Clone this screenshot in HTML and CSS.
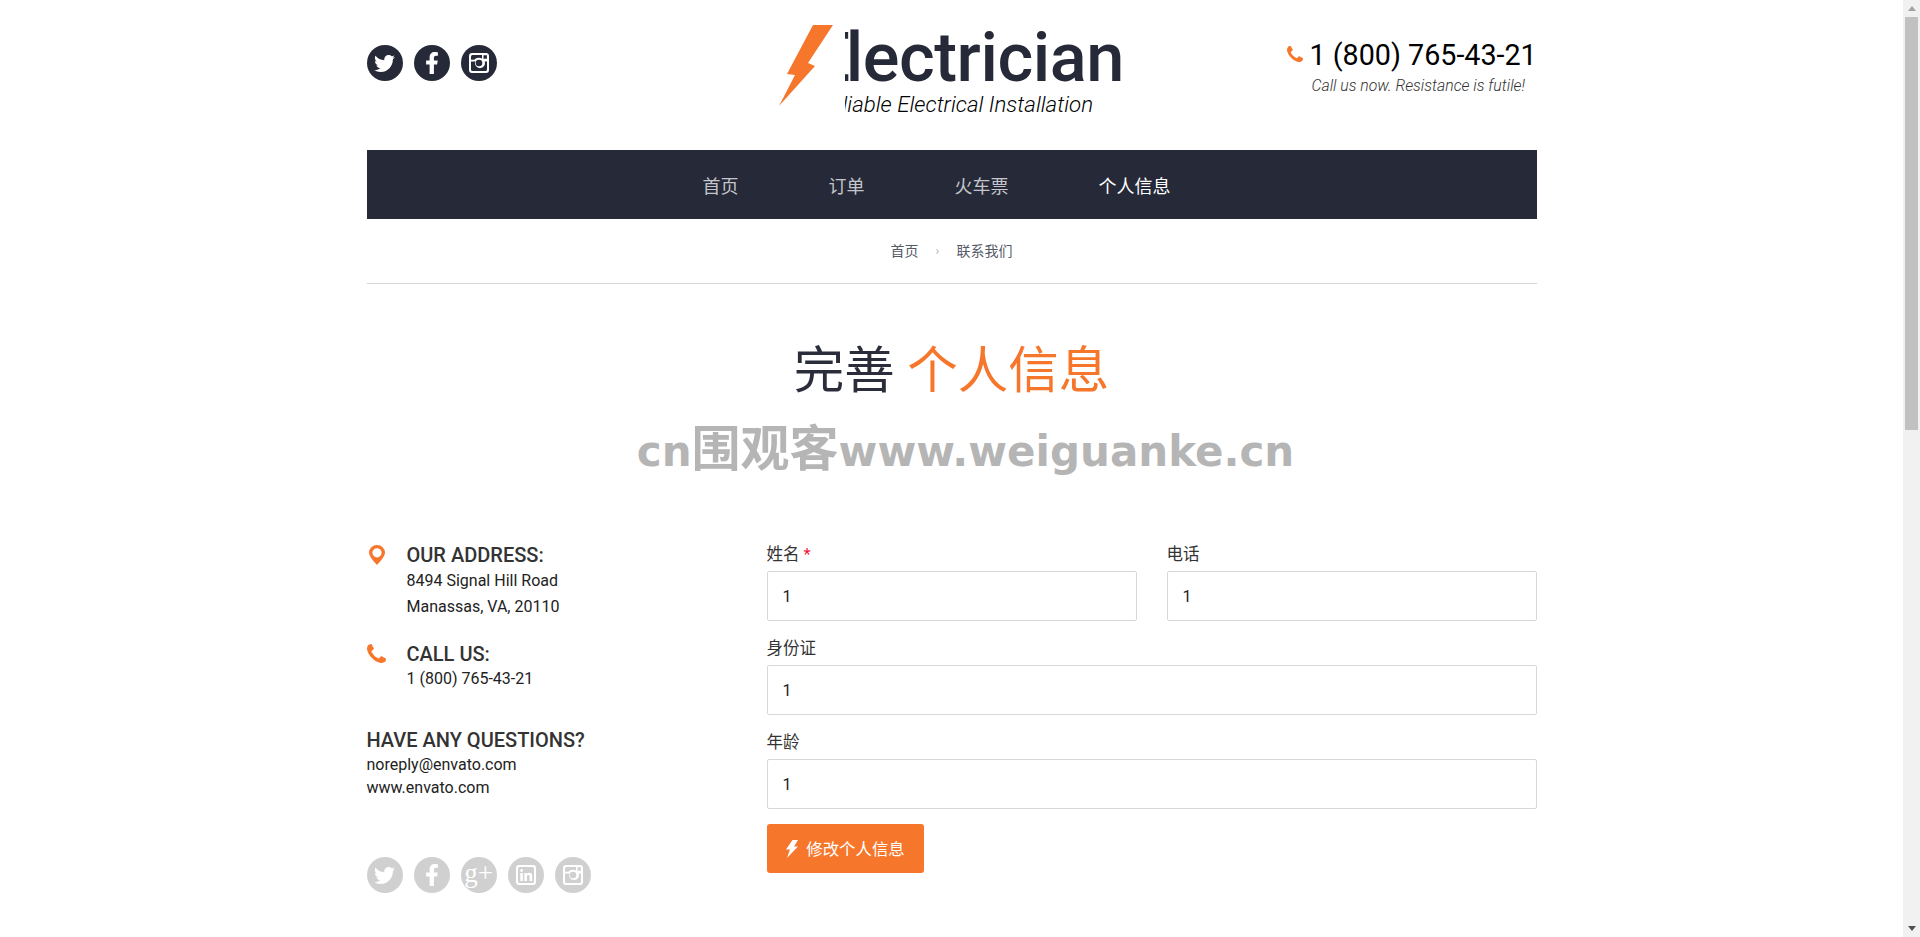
FILE: index.html
```html
<!DOCTYPE html>
<html lang="zh">
<head>
<meta charset="utf-8">
<title>Electrician</title>
<link rel="stylesheet" href="styles.css">
</head>
<body>
<svg class="defs" width="0" height="0" aria-hidden="true">
  <symbol id="i-tw" viewBox="0 0 512 512"><path fill="currentColor" d="M459.37 151.716c.325 4.548.325 9.097.325 13.645 0 138.72-105.583 298.558-298.558 298.558-59.452 0-114.68-17.219-161.137-47.106 8.447.974 16.568 1.299 25.34 1.299 49.055 0 94.213-16.568 130.274-44.832-46.132-.975-84.792-31.188-98.112-72.772 6.498.974 12.995 1.624 19.818 1.624 9.421 0 18.843-1.3 27.614-3.573-48.081-9.747-84.143-51.98-84.143-102.985v-1.299c13.969 7.797 30.214 12.67 47.431 13.319-28.264-18.843-46.781-51.005-46.781-87.391 0-19.492 5.197-37.36 14.294-52.954 51.655 63.675 129.3 105.258 216.365 109.807-1.624-7.797-2.599-15.918-2.599-24.04 0-57.828 46.782-104.934 104.934-104.934 30.213 0 57.502 12.67 76.67 33.137 23.715-4.548 46.456-13.32 66.599-25.34-7.798 24.366-24.366 44.833-46.132 57.827 21.117-2.273 41.584-8.122 60.426-16.243-14.292 20.791-32.161 39.308-52.628 54.253z"/></symbol>
  <symbol id="i-fb" viewBox="0 0 320 512"><path fill="currentColor" d="M279.14 288l14.22-92.66h-88.91v-60.13c0-25.35 12.42-50.06 52.24-50.06h40.42V6.26S260.43 0 225.36 0c-73.22 0-121.08 44.38-121.08 124.72v70.62H22.89V288h81.39v224h100.17V288z"/></symbol>
  <symbol id="i-ig" viewBox="0 0 20 20"><path fill="currentColor" fill-rule="evenodd" d="M3 0h14a3 3 0 0 1 3 3v14a3 3 0 0 1-3 3H3a3 3 0 0 1-3-3V3a3 3 0 0 1 3-3zM2 8.500V16.500a1.500 1.500 0 0 0 1.500 1.500h13a1.500 1.500 0 0 0 1.500-1.500V8.500h-2.300a5 5 0 1 1-9.400 0zM10 6.700a3.300 3.300 0 1 0 0 6.600 3.300 3.300 0 0 0 0-6.600zM2 6.800h3.200A6 6 0 0 1 10 4.800a6 6 0 0 1 3 .8V2H3.500A1.500 1.500 0 0 0 2 3.500zM14.500 2.200v3.600h3.400V2.200z"/></symbol>
  <symbol id="i-in" viewBox="0 0 20 20"><path fill="currentColor" fill-rule="evenodd" d="M3 0h14a3 3 0 0 1 3 3v14a3 3 0 0 1-3 3H3a3 3 0 0 1-3-3V3a3 3 0 0 1 3-3zM3.500 2A1.500 1.500 0 0 0 2 3.500v13A1.500 1.500 0 0 0 3.500 18h13a1.500 1.500 0 0 0 1.500-1.500v-13A1.500 1.500 0 0 0 16.500 2z"/><path fill="currentColor" d="M4.300 8h2.600v8H4.300zM5.600 4a1.400 1.400 0 1 1 0 2.900 1.400 1.400 0 0 1 0-2.900zM8.300 8h2.500v1.100c.4-.7 1.300-1.300 2.500-1.300 2.200 0 2.900 1.400 2.900 3.500V16h-2.600v-4.200c0-1-.3-1.700-1.200-1.700-1 0-1.500.7-1.500 1.800V16H8.300z"/></symbol>
  <symbol id="i-ph" viewBox="0 128 1408 1408"><path fill="currentColor" d="M1408 1240q0 27-10 70.500t-21 68.500q-21 50-122 106-94 51-186 51-27 0-53-3.500t-57.500-12.500-47-14.500-55.500-20.500-49-18q-98-35-175-83-127-79-264-216t-216-264q-48-77-83-175-3-9-18-49t-20.500-55.500-14.500-47-12.500-57.500-3.500-53q0-92 51-186 56-101 106-122 25-11 68.500-21t70.500-10q14 0 21 3 18 6 53 76 11 19 30 54t35 63.500 31 53.500q3 4 17.500 25t21.500 35.500 7 28.500q0 20-28.500 50t-62 55-62 53-28.500 46q0 9 5 22.500t8.500 20.500 14 24 11.500 19q76 137 174 235t235 174q2 1 19 11.500t24 14 20.500 8.500 22.500 5q18 0 46-28.500t53-62 55-62 50-28.500q14 0 28.500 7t35.500 21.500 25 17.500q25 15 53.500 31t63.500 35 54 30q70 35 76 53 3 7 3 21z"/></symbol>
</svg>

<div class="screen">
  <div class="page">
    <div class="container">
      <header class="header">
        <ul class="social">
          <li class="circle dark"><svg class="ic-tw"><use href="#i-tw"/></svg></li>
          <li class="circle dark"><svg class="ic-fb"><use href="#i-fb"/></svg></li>
          <li class="circle dark"><svg class="ic-ig"><use href="#i-ig"/></svg></li>
        </ul>
        <div class="logo">
          <svg class="bolt" viewBox="0 0 60 86"><polygon fill="#f6772b" points="34,0 54,0 29,38 36,41 0,81 16,50 8,49"/></svg>
          <div class="logo-text">
            <div class="logo-name"><span class="logo-e">E</span>lectrician</div>
            <div class="logo-sub">Reliable Electrical Installation</div>
          </div>
        </div>
        <div class="contact">
          <div class="contact-phone"><svg class="ic-phone"><use href="#i-ph"/></svg>1 (800) 765-43-21</div>
          <div class="contact-note">Call us now. Resistance is futile!</div>
        </div>
      </header>

      <nav class="nav">
        <a class="nav-item">首页</a>
        <a class="nav-item">订单</a>
        <a class="nav-item">火车票</a>
        <a class="nav-item active">个人信息</a>
      </nav>

      <div class="crumbs">
        <a>首页</a><span class="sep">›</span><a>联系我们</a>
      </div>

      <h1 class="title">完善 <span class="accent">个人信息</span></h1>
      <div class="watermark">cn<span class="wm-cjk">围观客</span>www.weiguanke.cn</div>

      <div class="columns">
        <aside class="info">
          <div class="info-block with-icon">
            <svg class="ic-pin" viewBox="0 0 16 20"><path fill="#f6772b" fill-rule="evenodd" d="M8 20Q0 11.500 0 7.700a8 7.700 0 0 1 16 0Q16 11.500 8 20zM8 3.200a4.600 4.600 0 1 0 0 9.200 4.600 4.600 0 0 0 0-9.200z"/></svg>
            <h4>OUR ADDRESS:</h4>
            <p>8494 Signal Hill Road</p>
            <p>Manassas, VA, 20110</p>
          </div>
          <div class="info-block with-icon call">
            <svg class="ic-call"><use href="#i-ph"/></svg>
            <h4>CALL US:</h4>
            <p>1 (800) 765-43-21</p>
          </div>
          <div class="info-block questions">
            <h4>HAVE ANY QUESTIONS?</h4>
            <p>noreply@envato.com</p>
            <p>www.envato.com</p>
          </div>
          <ul class="social grey">
            <li class="circle light"><svg class="ic-tw"><use href="#i-tw"/></svg></li>
            <li class="circle light"><svg class="ic-fb"><use href="#i-fb"/></svg></li>
            <li class="circle light gplus">g+</li>
            <li class="circle light"><svg class="ic-ig"><use href="#i-in"/></svg></li>
            <li class="circle light"><svg class="ic-ig"><use href="#i-ig"/></svg></li>
          </ul>
        </aside>

        <form class="form">
          <div class="row two">
            <label class="field"><span class="lbl">姓名 <em>*</em></span><input class="input" value="1"></label>
            <label class="field"><span class="lbl">电话</span><input class="input" value="1"></label>
          </div>
          <label class="field"><span class="lbl">身份证</span><input class="input" value="1"></label>
          <label class="field"><span class="lbl">年龄</span><input class="input" value="1"></label>
          <button class="btn" type="button"><svg class="ic-btn" viewBox="0 0 12 18"><polygon fill="#fff" points="6.500,0 12,0 8,6.500 12,6.500 1,18 4,9.500 0,9.500"/></svg><span class="btn-label">修改个人信息</span></button>
        </form>
      </div>
    </div>
  </div>
  <div class="scrollbar">
    <div class="sb-btn"><span class="arrow up"></span></div>
    <div class="sb-track"><div class="sb-thumb"></div></div>
    <div class="sb-btn"><span class="arrow down"></span></div>
  </div>
</div>
</body>
</html>
```
FILE: styles.css
```css
* { box-sizing: border-box; }
html, body { margin: 0; padding: 0; height: 100%; overflow: hidden; background: #fff; }
body { font-family: Roboto, "Noto Sans CJK SC", sans-serif; color: #262937; }
ul { list-style: none; margin: 0; padding: 0; }
h1, h4, p { margin: 0; }
.defs { display: block; height: 0; }

.screen { display: flex; height: 937px; overflow: hidden; }
.page { flex: 1; min-width: 0; overflow: hidden; }
.container { width: 1170px; margin: 0 auto; }

.header { height: 150px; display: flex; align-items: flex-start; }
.social { display: flex; gap: 11px; flex: none; }
.header .social { margin-top: 45px; }
.circle { width: 36px; height: 36px; border-radius: 50%; display: flex; align-items: center; justify-content: center; }
.circle.dark { background: #262937; color: #fff; }
.circle.light { background: #d0d0d0; color: #fff; }
.ic-tw { width: 21px; height: 21px; }
.ic-fb { width: 14px; height: 22px; }
.ic-ig { width: 20px; height: 20px; }
.gplus { font: 27px/32px "Liberation Serif", serif; padding-bottom: 5px; }

.logo { display: flex; align-items: flex-start; margin-top: 25px; margin-left: 282px; flex: none; }
.bolt { width: 60px; height: 86px; flex: none; display: block; margin-right: 6px; }
.logo-text { width: 290px; overflow: hidden; padding-top: 2px; }
.logo-name { font-size: 68.5px; line-height: 62px; font-weight: 500; color: #262937; margin-left: -33px; white-space: nowrap; letter-spacing: -.45px; }
.logo-e { letter-spacing: -4.5px; }
.logo-sub { font-size: 22.3px; line-height: 28px; font-style: italic; font-weight: 300; color: #000; margin-left: -27px; white-space: nowrap; margin-top: 1px; }

.contact { margin-top: 38px; margin-left: auto; width: 250px; }
.contact-phone { display: flex; align-items: center; font-size: 28.7px; line-height: 34px; color: #000; white-space: nowrap; }
.ic-phone { width: 16px; height: 16px; color: #f6772b; margin-right: 7px; flex: none; margin-top: -3px; }
.contact-note { font-size: 15.8px; line-height: 20px; font-style: italic; font-weight: 300; color: #333; margin-top: 4px; padding-left: 25px; white-space: nowrap; }

.nav { height: 69px; background: #262937; display: flex; align-items: center; padding-left: 336px; gap: 90px; }
.nav-item { font-size: 18px; color: #c4c6cb; }
.nav-item.active { color: #fff; }

.crumbs { height: 65px; border-bottom: 1px solid #d5d5d5; display: flex; justify-content: center; align-items: center; font-size: 14px; color: #555a67; padding-bottom: 2px; }
.crumbs .sep { margin: 0 17px; color: #b5b5b5; font-size: 13px; }

.title { margin-top: 55px; height: 64px; font-size: 50.5px; line-height: 64px; font-weight: 400; text-align: center; color: #2b2e3a; }
.accent { color: #f6772b; }
.watermark { margin-top: 20px; padding-left: 28px; height: 54px; line-height: 54px; text-align: center; font-family: "DejaVu Sans", "Noto Sans CJK SC", sans-serif; font-weight: 700; font-size: 42px; color: #b5b5b5; white-space: nowrap; }
.wm-cjk { font-size: 49px; }

.columns { display: flex; margin-top: 66px; }
.info { width: 400px; flex: none; }
.info-block { position: relative; }
.with-icon { padding-left: 40px; }
.info h4 { font-size: 20px; line-height: 25px; font-weight: 500; color: #333; }
.info .call h4 { line-height: 24px; }
.info p { font-size: 16px; line-height: 26px; color: #222; }
.ic-pin { position: absolute; left: 2px; top: 2px; width: 16px; height: 20px; }
.ic-call { position: absolute; left: 0; top: 2px; width: 19px; height: 19px; color: #f6772b; }
.call { margin-top: 22px; }
.questions { margin-top: 36px; }
.questions p { line-height: 23px; }
.grey { margin-top: 58px; }

.form { flex: 1; min-width: 0; display: flex; flex-direction: column; gap: 16px; }
.row.two { display: grid; grid-template-columns: 370px 370px; gap: 30px; }
.field { display: block; }
.lbl { display: block; height: 28px; font-size: 16.5px; line-height: 24px; color: #333; }
.lbl em { font-style: normal; color: #f0143c; }
.input { display: block; width: 100%; height: 50px; border: 1px solid #d8d8d8; border-radius: 2px; padding: 0 15px; font: 16px Roboto, sans-serif; color: #222; background: #fff; outline: none; }
.btn { align-self: flex-start; width: 157px; height: 49px; margin-top: -1px; border: 0; border-radius: 3px; background: #f6772b; color: #fff; font: 400 16.4px Roboto, "Noto Sans CJK SC", sans-serif; display: flex; align-items: center; justify-content: center; gap: 8px; padding: 0 0 0 1px; }
.btn-label { margin-top: -2px; }
.ic-btn { width: 12px; height: 18px; }

.scrollbar { width: 17px; flex: none; background: #f1f1f1; display: flex; flex-direction: column; }
.sb-btn { height: 17px; flex: none; display: flex; align-items: center; justify-content: center; }
.arrow { width: 0; height: 0; border-left: 4px solid transparent; border-right: 4px solid transparent; }
.arrow.up { border-bottom: 5px solid #a3a3a3; }
.arrow.down { border-top: 5px solid #505050; }
.sb-track { flex: 1; padding: 0 2px; }
.sb-thumb { height: 413px; background: #c1c1c1; }
```
